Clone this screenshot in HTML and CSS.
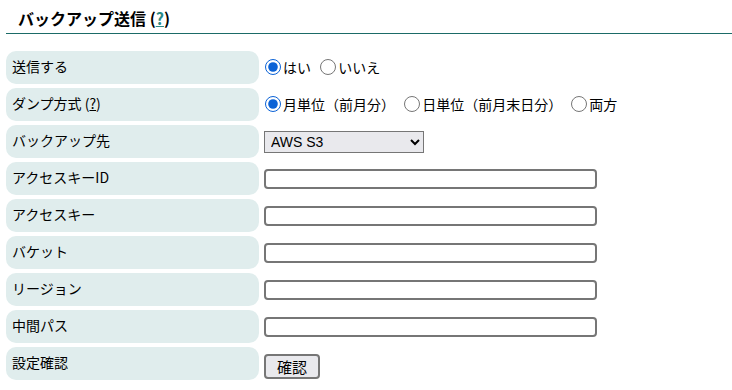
FILE: index.html
```html
<!DOCTYPE html>
<html lang="ja">
<head>
  <meta charset="UTF-8">
  <title>バックアップ送信</title>
  <link rel="stylesheet" href="styles.css">
</head>
<body>
  <h2 class="section-title">バックアップ送信 (<a href="#" class="help">?</a>)</h2>

  <table class="settings">
    <tr>
      <th>送信する</th>
      <td>
        <label class="opt"><input type="radio" name="send" checked>はい</label>
        <label class="opt"><input type="radio" name="send">いいえ</label>
      </td>
    </tr>
    <tr>
      <th>ダンプ方式 (<a href="#" class="help-plain">?</a>)</th>
      <td>
        <label class="opt"><input type="radio" name="dump" checked>月単位（前月分）</label>
        <label class="opt"><input type="radio" name="dump">日単位（前月末日分）</label>
        <label class="opt"><input type="radio" name="dump">両方</label>
      </td>
    </tr>
    <tr>
      <th>バックアップ先</th>
      <td>
        <select class="dest">
          <option>AWS S3</option>
        </select>
      </td>
    </tr>
    <tr>
      <th>アクセスキーID</th>
      <td><input type="text" class="field"></td>
    </tr>
    <tr>
      <th>アクセスキー</th>
      <td><input type="text" class="field"></td>
    </tr>
    <tr>
      <th>バケット</th>
      <td><input type="text" class="field"></td>
    </tr>
    <tr>
      <th>リージョン</th>
      <td><input type="text" class="field"></td>
    </tr>
    <tr>
      <th>中間パス</th>
      <td><input type="text" class="field"></td>
    </tr>
    <tr>
      <th>設定確認</th>
      <td><button type="button" class="check">確認</button></td>
    </tr>
  </table>
</body>
</html>
```

FILE: styles.css
```css
body {
  margin: 0;
  padding: 0 0 0 6px;
  font-family: "Noto Sans CJK JP", "Noto Sans", sans-serif;
  font-size: 14px;
  color: #000;
  background: #fff;
}

/* Section heading with teal rule */
.section-title {
  margin: 0;
  padding: 6px 0 0 12px;
  height: 27px;
  font-size: 16px;
  font-weight: bold;
  line-height: 24px;
  border-bottom: 1px solid #1b6b67;
}

.help {
  color: #2a8a86;
  text-decoration: underline;
}

.help-plain {
  color: #000;
  text-decoration: underline;
}

/* Settings table */
.settings {
  border-collapse: separate;
  border-spacing: 0 4px;
  margin-top: 13px;
}

.settings th {
  width: 253px;
  height: 33px;
  box-sizing: border-box;
  padding: 0 0 3px 6px;
  background: #e0eded;
  border-radius: 10px;
  text-align: left;
  font-weight: normal;
  vertical-align: middle;
}

.settings td {
  padding: 0 0 0 5px;
  vertical-align: middle;
}

.opt {
  display: inline-flex;
  align-items: center;
  margin-right: 5px;
  font-size: 14px;
}

.opt input {
  margin: 0 2px 0 1px;
  width: 16px;
  height: 16px;
  accent-color: #0b62d6;
}

.dest {
  width: 160px;
  height: 22px;
  font-family: "Liberation Sans", Arial, sans-serif;
  font-size: 14px;
  background: #e9e9ed;
  border: 1px solid #767676;
  border-radius: 0;
  padding: 0 2px;
}

.field {
  width: 333px;
  height: 20px;
  box-sizing: border-box;
  border: 2px solid #767676;
  border-radius: 4px;
  padding: 0 4px;
}

.check {
  height: 25px;
  width: 56px;
  margin-top: 6px;
  font-family: "Noto Sans CJK JP", sans-serif;
  font-size: 15px;
  line-height: 1;
  background: #e9e9ed;
  border: 2px solid #767676;
  border-radius: 4px;
  padding: 0;
}
```
